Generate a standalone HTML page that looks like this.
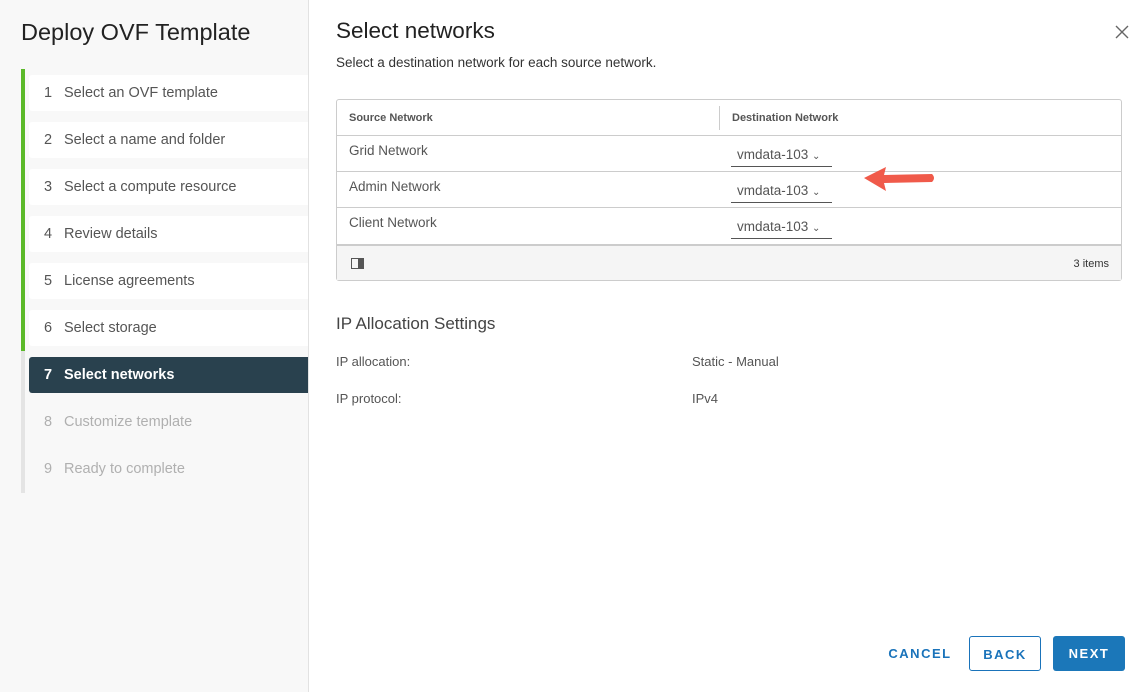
<!DOCTYPE html>
<html><head><style>
*{margin:0;padding:0;box-sizing:border-box}
body{width:1143px;height:692px;overflow:hidden;font-family:"Liberation Sans",sans-serif;color:#333;background:#fff;position:relative}
.left{position:absolute;left:0;top:0;width:309px;height:692px;background:#f8f8f8;border-right:1px solid #e2e2e2}
.left h1{position:absolute;left:21px;top:19px;font-size:23.5px;font-weight:normal;color:#222}
.bar{position:absolute;left:21px;width:4px}
.item{position:absolute;left:29px;width:279px;height:36px;background:#fff;border-radius:3px 0 0 3px;font-size:14.5px;line-height:36px;padding-left:15px;color:#555}
.item span{display:inline-block;width:20px}
.item.act{background:#29414e;color:#fff;font-weight:bold}
.item.dis{background:none;color:#b0b0b0}
.title{position:absolute;left:336px;top:18px;font-size:22.5px;color:#222}
.sub{position:absolute;left:336px;top:55px;font-size:13.5px;color:#333}
.close{position:absolute;left:1114px;top:24px}
.tbl{position:absolute;left:336px;top:99px;width:786px;height:182px;border:1px solid #ccc;border-radius:3px}
.row{position:absolute;left:0;width:784px;height:36px;border-bottom:1px solid #ccc;font-size:13.5px;color:#555}
.row .a{position:absolute;left:12px;top:7px}
.sel{position:absolute;left:394px;top:9px;width:101px;height:22px;border-bottom:1px solid #555;font-size:13.5px;padding-left:6px;line-height:20px}
.h{font-size:11px;font-weight:bold;color:#555}
.foot{position:absolute;left:0;top:144px;width:784px;height:36px;background:#f5f5f5;border-top:2px solid #ccc;font-size:11px}
.lab{position:absolute;font-size:13px;color:#555}
.btn{position:absolute;top:636px;height:35px;font-size:13px;font-weight:bold;letter-spacing:1.5px;text-align:center;line-height:35px;color:#1a73ba;border-radius:3px}
</style></head><body>
<div class="left">
<h1>Deploy OVF Template</h1>
<div class="bar" style="top:69px;height:282px;background:#5bb929"></div>
<div class="bar" style="top:351px;height:142px;background:#e4e4e4"></div>
<div class="item" style="top:75px"><span>1</span>Select an OVF template</div>
<div class="item" style="top:122px"><span>2</span>Select a name and folder</div>
<div class="item" style="top:169px"><span>3</span>Select a compute resource</div>
<div class="item" style="top:216px"><span>4</span>Review details</div>
<div class="item" style="top:263px"><span>5</span>License agreements</div>
<div class="item" style="top:310px"><span>6</span>Select storage</div>
<div class="item act" style="top:357px"><span>7</span>Select networks</div>
<div class="item dis" style="top:404px"><span>8</span>Customize template</div>
<div class="item dis" style="top:451px"><span>9</span>Ready to complete</div>
</div>
<div class="title">Select networks</div>
<div class="sub">Select a destination network for each source network.</div>
<svg class="close" width="16" height="16" viewBox="0 0 16 16"><path d="M2 2L14 14M14 2L2 14" stroke="#666" stroke-width="1.4"/></svg>
<div class="tbl">
<div class="row" style="top:0"><div class="a h" style="top:12px">Source Network</div><div style="position:absolute;left:382px;top:6px;height:24px;border-left:1px solid #ccc"></div><div class="a h" style="left:395px;top:12px">Destination Network</div></div>
<div class="row" style="top:36px"><div class="a">Grid Network</div><div class="sel">vmdata-103 <span style="font-size:10px">&#8964;</span></div></div>
<div class="row" style="top:72px"><div class="a">Admin Network</div><div class="sel">vmdata-103 <span style="font-size:10px">&#8964;</span></div></div>
<div class="row" style="top:108px;border-bottom:none"><div class="a">Client Network</div><div class="sel">vmdata-103 <span style="font-size:10px">&#8964;</span></div></div>
<div class="foot"><svg style="position:absolute;left:14px;top:12px" width="14" height="12"><rect x="0.5" y="0.5" width="12" height="10" fill="none" stroke="#555"/><rect x="7" y="1" width="5" height="9" fill="#555"/></svg><span style="position:absolute;right:12px;top:12px">3 items</span></div>
</div>
<svg style="position:absolute;left:860px;top:163px" width="80" height="32"><path d="M4 15L26 4L24 12L72 11Q76 15 72 19L24 20L26 28Z" fill="#f05a4a"/></svg>
<div class="lab" style="left:336px;top:314px;font-size:17px;color:#444">IP Allocation Settings</div>
<div class="lab" style="left:336px;top:354px">IP allocation:</div>
<div class="lab" style="left:692px;top:354px">Static - Manual</div>
<div class="lab" style="left:336px;top:391px">IP protocol:</div>
<div class="lab" style="left:692px;top:391px">IPv4</div>
<div class="btn" style="left:884px;width:72px">CANCEL</div>
<div class="btn" style="left:969px;width:72px;border:1px solid #1a73ba">BACK</div>
<div class="btn" style="left:1053px;width:72px;background:#1b77b9;color:#fff">NEXT</div>
</body></html>
